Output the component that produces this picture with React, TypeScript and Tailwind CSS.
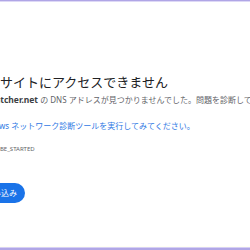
export default function App() {
  return (
    <div
      className="flex h-[250px] w-[250px] flex-col overflow-hidden bg-white"
      style={{ fontFamily: '"Noto Sans", "Noto Sans CJK JP", sans-serif' }}
    >
      <div className="h-px bg-[#b0a6e6]" />
      <div className="h-px bg-[#ddd8f6]" />

      {/* error body, cut on the left edge */}
      <div className="flex flex-1 flex-col items-start whitespace-nowrap pt-[72px]">
        <h1 className="-ml-[26px] text-[13px] leading-[17px] font-normal text-[#202124]">
          このサイトにアクセスできません
        </h1>
        <p className="-ml-[17px] mt-[3px] text-[8px] leading-[12px] text-[#5f6368]">
          <span className="text-[8.5px] font-bold text-[#3c4043]">ewatcher.net</span> の DNS
          アドレスが見つかりませんでした。問題を診断しています。
        </p>
        <p className="-ml-[25px] mt-[14px] text-[8px] leading-[12px] text-[#2f78e4]">
          Windows ネットワーク診断ツールを実行してみてください。
        </p>
        <div className="-ml-[27px] mt-[13px] text-[6px] leading-[9px] text-[#5f6368]">
          DNS_PROBE_STARTED
        </div>
        <button className="-ml-[31px] mt-[29px] h-[20px] rounded-full bg-[#1a73e8] px-[8px] text-[8px] leading-[20px] text-white">
          再読み込み
        </button>
      </div>

      <div className="h-px bg-[#fffff4]" />
      <div className="h-px bg-[#d6d0f4]" />
      <div className="h-[2px] bg-[#b0a6e6]" />
    </div>
  );
}
